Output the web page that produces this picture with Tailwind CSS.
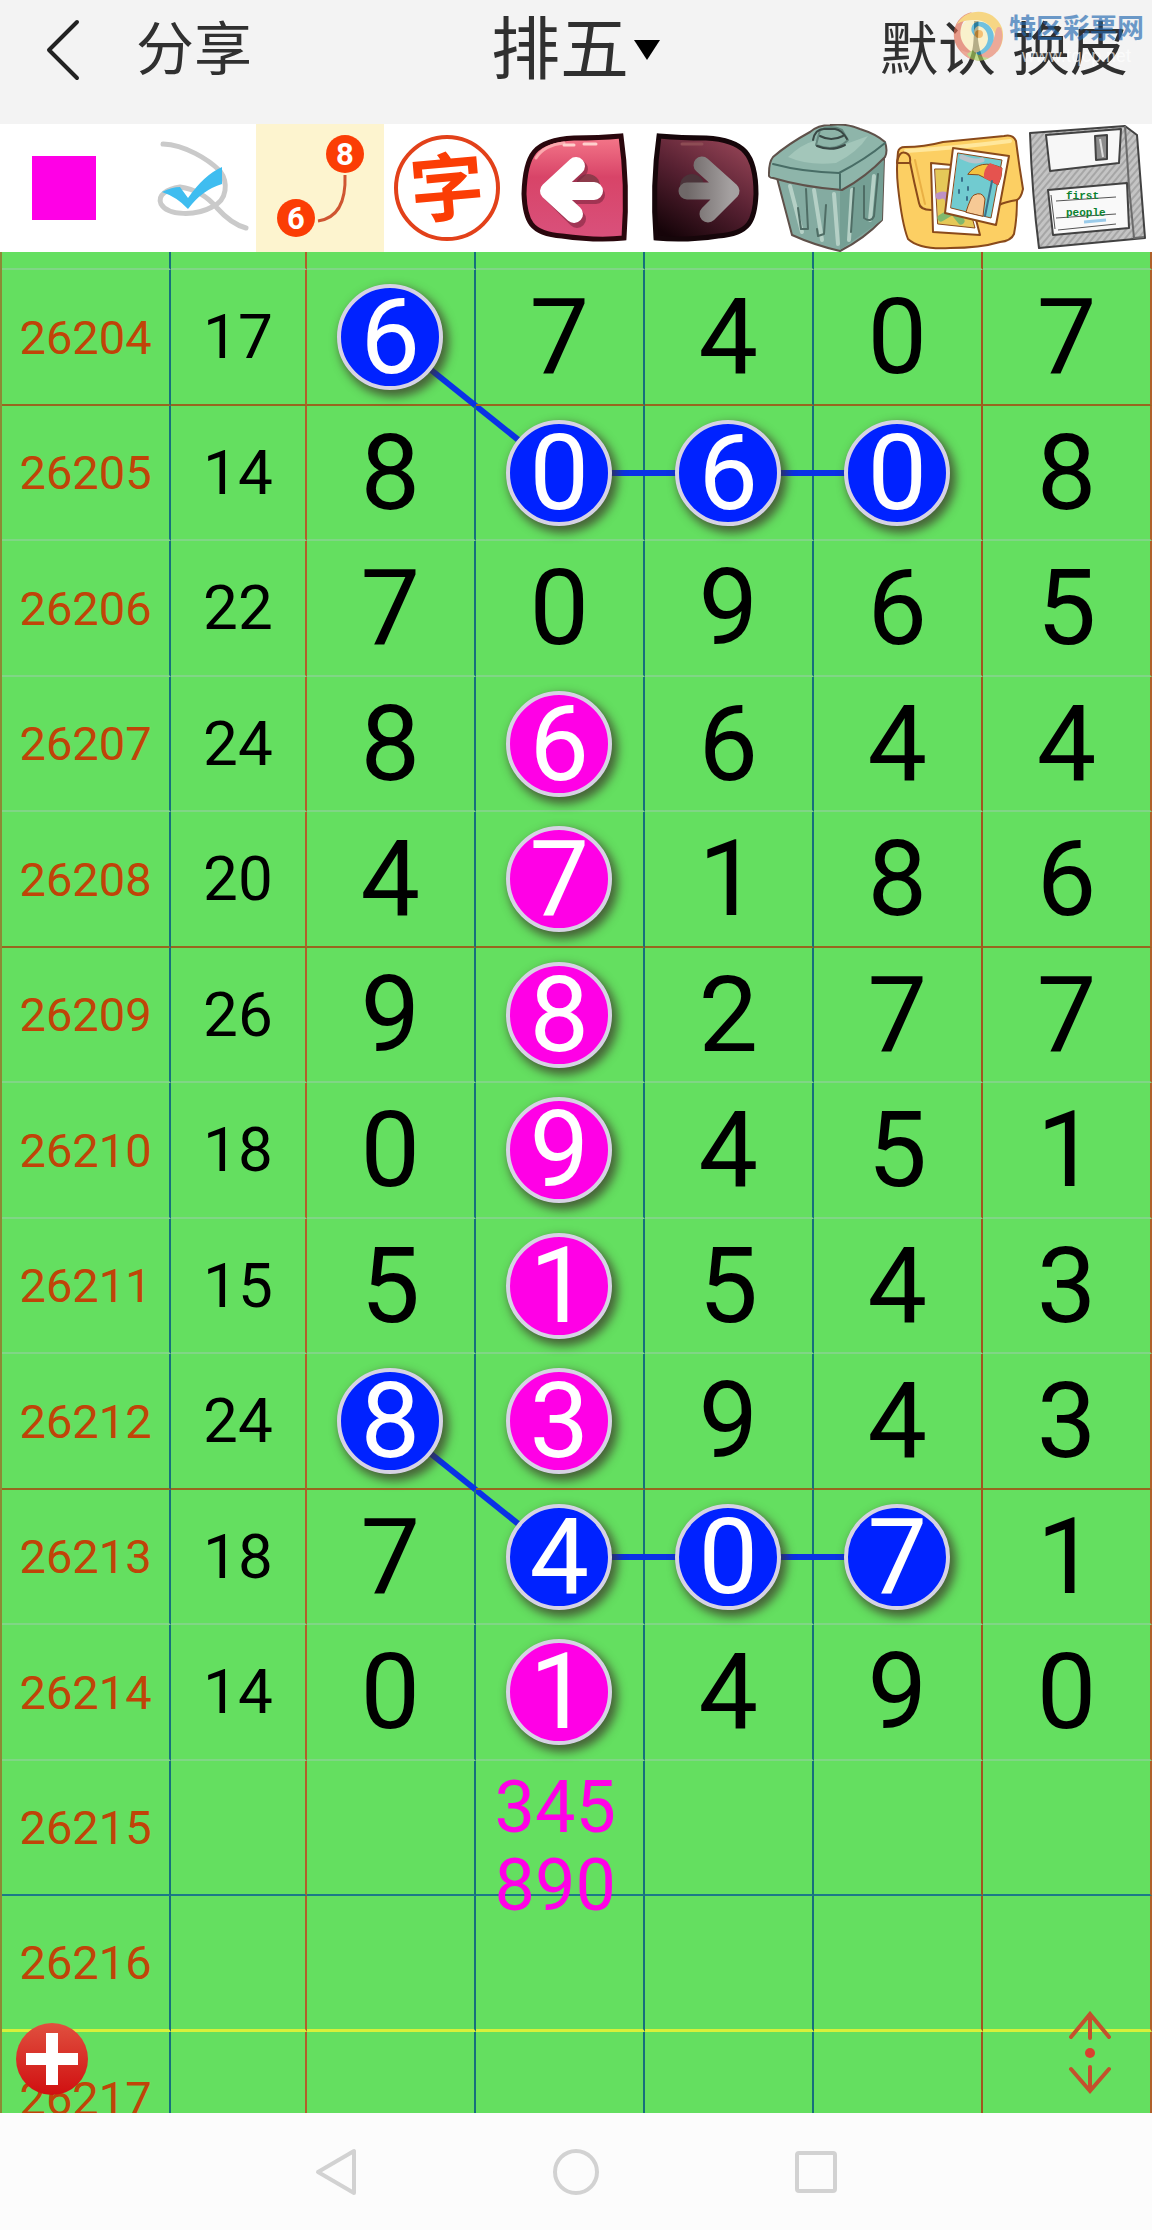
<!DOCTYPE html>
<html lang="zh-CN">
  <head>
    <title>排五</title>
    <meta charset="UTF-8" />
    <meta name="viewport" content="width=device-width, initial-scale=1" />
    <script src="https://cdn.jsdelivr.net/npm/@tailwindcss/browser@4"></script>
  </head>
  <body
    class="flex h-screen flex-col overflow-hidden bg-[#fcfcfc] font-[Roboto,'Noto_Sans_CJK_SC',sans-serif]"
  >
    <header
      class="relative grid h-[124px] shrink-0 grid-cols-[1fr_auto_1fr] items-center bg-[#f3f3f3] px-6 pb-6 text-[58px] leading-none text-[#303030]"
    >
      <div class="flex items-center gap-14 pl-5">
        <button aria-label="返回">
          <svg class="h-16 w-9" viewBox="0 0 36 64" fill="none" stroke="#222" stroke-width="4" stroke-linecap="round" stroke-linejoin="round">
            <path d="M33 4 5 32l28 28" />
          </svg>
        </button>
        <button>分享</button>
      </div>
      <div class="flex items-center gap-1 text-[69px]">
        <select aria-label="彩种" class="appearance-none leading-none">
          <option>排五</option>
        </select>
        <svg class="h-5 w-7" viewBox="0 0 28 20"><path d="M1 0h26L14 20z" /></svg>
      </div>
      <div class="flex justify-end gap-4">
        <button>默认</button>
        <button>换皮</button>
      </div>

      <!-- site mark -->
      <div class="pointer-events-none absolute top-2 right-2 flex items-start gap-1 opacity-65">
        <svg class="h-14 w-14" viewBox="0 0 56 56" fill="none">
          <circle cx="29" cy="28" r="19" fill="#fdf0b8" />
          <path d="M23 4C4 8-2 32 14 46c8 8 22 8 28 2C24 50 8 36 12 20c2-9 8-13 11-16z" fill="#e06a50" />
          <path d="M8 16C18-2 46 0 53 20c3 10-1 20-5 24 2-20-8-32-22-32-8 0-13 1-18 4z" fill="#f9c84a" />
          <path d="M52 20c6 18-8 34-24 32-8 0-14-5-16-10 16 8 32-2 34-16 1-8 4-8 6-6z" fill="#e98268" />
          <path d="M28 14c12-2 22 12 14 24-6 10-18 12-24 8 12 0 20-6 21-15 0-8-4-12-10-13-4 2-5 6-3 10-6-4-4-13 2-14z" fill="#2ba7d6" />
          <path d="M18 46c4 7 14 9 22 4-6 0-14-4-16-8z" fill="#a9d05a" />
          <circle cx="30" cy="26" r="4" fill="#f6a531" />
        </svg>
        <div class="pt-2 leading-none">
          <p class="text-[27px] font-bold text-[#2268b0]">特区彩票网</p>
          <p class="pt-1 text-center text-[18px] leading-none text-white">www.tqcp.net</p>
        </div>
      </div>
    </header>

    <div class="grid h-32 shrink-0 grid-cols-9 bg-white" role="toolbar">
      <button class="flex items-center justify-center" aria-label="颜色">
        <span class="size-16 bg-[#ff00e6]"></span>
      </button>

      <button aria-label="选择">
        <svg class="h-full w-full" viewBox="0 0 128 128" fill="none">
          <path d="M35 20c22 1 45 15 57 27 8 11 8 29-8 36-16 9-44 9-51-3-4-9 6-15 19-17 16 2 27 9 37 21 8 9 18 17 29 20" stroke="#cacaca" stroke-width="5" stroke-linecap="round" />
          <path d="M34 68q10-5 18-5l8 11q16-23 34-31v17q-20 6-34 25Q49 73 34 68z" fill="#3fbdf0" />
        </svg>
      </button>

      <button class="bg-[#fdf4cf]" aria-label="连线" aria-pressed="true">
        <svg class="h-full w-full" viewBox="0 0 128 128" text-anchor="middle" font-size="31" font-weight="700">
          <path d="M89 51c1 26-6 43-27 46" fill="none" stroke="#cf5531" stroke-width="3" />
          <circle cx="89" cy="30" r="19" fill="#fb3d05" />
          <circle cx="40" cy="94" r="19" fill="#fb3d05" />
          <text x="89" y="41" fill="#fff">8</text>
          <text x="40" y="105" fill="#fff">6</text>
        </svg>
      </button>

      <button aria-label="写字">
        <svg class="h-full w-full" viewBox="0 0 128 128">
          <circle cx="63" cy="64" r="51" fill="#fff" stroke="#e2411a" stroke-width="4" />
          <text x="63" y="91" text-anchor="middle" font-size="74" font-weight="700" fill="#fb3d05" transform="rotate(-5 63 64)">字</text>
        </svg>
      </button>

      <button aria-label="后退">
        <svg class="h-full w-full" viewBox="0 0 128 128">
          <defs>
            <linearGradient id="pink" x1="0" y1="0" x2="0" y2="1">
              <stop offset="0" stop-color="#f5788a" />
              <stop offset="0.4" stop-color="#d84468" />
              <stop offset="1" stop-color="#d9517c" />
            </linearGradient>
          </defs>
          <path d="M109 12Q116 60 112 114 85 117 50 112C18 110 13 96 12 70 13 30 22 16 62 14q25 0 47-2z" fill="url(#pink)" stroke="#2a070d" stroke-width="5" />
          <path d="M24 34q8-13 28-15" fill="none" stroke="#fba9ae" stroke-width="3" stroke-linecap="round" />
          <path d="M52 21h10M72 20h12" stroke="#ffd0cd" stroke-width="3" stroke-linecap="round" />
          <circle cx="76" cy="62" r="12" fill="#8e3b4b" />
          <path d="M67 45 40 70l25 25M44 71h40" fill="none" stroke="#7d2740" stroke-width="18" stroke-linecap="round" stroke-linejoin="round" opacity=".6" />
          <path d="M64 42 37 67l25 23M40 67h42" fill="none" stroke="#fff" stroke-width="18" stroke-linecap="round" stroke-linejoin="round" />
        </svg>
      </button>

      <button aria-label="前进">
        <svg class="h-full w-full" viewBox="0 0 128 128">
          <defs>
            <linearGradient id="dark" x1="0.8" y1="0" x2="0.2" y2="1">
              <stop offset="0" stop-color="#974557" />
              <stop offset="0.5" stop-color="#562031" />
              <stop offset="1" stop-color="#160409" />
            </linearGradient>
            <linearGradient id="silver" x1="0" y1="0" x2="1" y2="0">
              <stop offset="0" stop-color="#6f6868" />
              <stop offset="1" stop-color="#a5a1a1" />
            </linearGradient>
          </defs>
          <path d="M19 12Q12 60 16 114 45 117 78 112C110 110 115 96 116 70 116 30 104 16 66 14q-25 0-47-2z" fill="url(#dark)" stroke="#16060a" stroke-width="5" />
          <path d="M42 20h20" stroke="#8d4c54" stroke-width="3" stroke-linecap="round" />
          <circle cx="52" cy="62" r="12" fill="#4b343a" />
          <path d="M62 41 91 67 68 90M47 67h42" fill="none" stroke="url(#silver)" stroke-width="17" stroke-linecap="round" stroke-linejoin="round" />
        </svg>
      </button>

      <button aria-label="清空">
        <svg class="h-full w-full" viewBox="0 0 128 128" fill="none" stroke="#5f514a" stroke-width="2" stroke-linecap="round" stroke-linejoin="round">
          <path d="M9 54 24 111q22 10 48 16 24-12 42-31l2-62z" fill="#84aba1" />
          <path d="M72 66v60l42-30 2-60z" fill="#759f94" stroke="none" />
          <path d="m22 62 12 46M46 66l8 50M66 70l4 50M84 66l-3 50M106 52l-4 44" stroke="#b5d0c6" stroke-width="4" />
          <path d="m30 84 3 21h7l-2-40M49 105l1 7 6-2 2-29M96 62v32q7 5 10-2l4-42M86 64l-3 44" stroke="#4f6d65" />
          <path d="M1 49q0-11 4-16Q20 20 42 8 50 1 62 1q16-2 30 4 16 5 25 13 3 9 0 15-19 20-43 33Q35 63 5 54 0 54 1 49z" fill="#8eb5aa" />
          <path d="M5 40q30 8 66 9Q98 35 117 19M72 50v15" stroke="#486d66" />
          <path d="M20 33Q34 20 46 17l32 3 22-8q-10 16-32 27-28 3-48-6z" fill="#a3c6ba" stroke="none" />
          <path d="M52 6q11-6 22 0l6 10q-13 13-32 5z" fill="#8db4a8" stroke="#64867d" />
          <path d="M45 16q2-11 11-11h11q7 1 12 10M52 12q11 6 23 0M49 22q14 6 28-1" stroke="#394845" />
        </svg>
      </button>

      <button aria-label="相册">
        <svg class="h-full w-full" viewBox="0 0 128 128" fill="none" stroke="#8a4a1b" stroke-width="2" stroke-linejoin="round" stroke-linecap="round">
          <path d="M2 28q1-5 7-5 19 0 38-5l61-6q9-2 12 5 3 24 7 48-2 9-6 11 0 19-3 34-3 7-14 8-20 6-50 6-30 2-42-9Q6 100 2 63 0 45 2 28z" fill="#fccf63" />
          <path d="M10 27q50-3 104-10" stroke="#ffe79c" stroke-width="4" />
          <path d="M1 39q2-13 9-10 5 2 4 9 4 20 9 41 1 7 12 7M1 39h13M121 76q-12 2-18 5" />
          <path d="M19 36q5 23 10 44" stroke="#eab044" />
          <path d="m35 39 31 3 18 69-47-3z" fill="#fff" />
          <path d="M39 45h24l16 59-37-4z" fill="#e5c858" stroke-width="1" />
          <path d="M43 72q10-4 10 10" stroke="#bd91c5" stroke-width="7" />
          <path d="m45 94 12-7 8 10" stroke="#80b86d" stroke-width="7" />
          <path d="m57 24 56 8-13 69-51-12z" fill="#fff" />
          <path d="m62 29 44 7-11 58-40-10z" fill="#71cbd0" stroke-width="1" />
          <path d="M66 33q12 6 20 3" stroke="#b9c4cb" stroke-width="5" />
          <path d="M72 50Q84 34 106 44q0 9-4 17l-9-5-10-5z" fill="#f4c23f" stroke-width="1" />
          <path d="M88 54q-1-9 6-15l12 5q0 9-4 17z" fill="#e5534f" stroke="none" />
          <path d="m96 57-7 35M66 54v3M72 63v3M63 66v3M71 73v3" stroke="#39708b" />
          <path d="M70 88q5-16 8-17 8-4 11 4l-2 17z" fill="#f6c995" stroke-width="1" />
        </svg>
      </button>

      <button aria-label="保存">
        <svg class="h-full w-full" viewBox="0 0 128 128" fill="none" stroke="#424242" stroke-width="2" stroke-linejoin="round">
          <defs>
            <pattern id="hatch" width="5" height="5" patternUnits="userSpaceOnUse" patternTransform="rotate(40)">
              <path d="M0 0h5v5H0z" fill="#c4c4c4" stroke="none" />
              <path d="M1 0v5" stroke="#888" stroke-width="1" />
            </pattern>
          </defs>
          <path d="m6 9 95-7 12 9 8 103-106 10Q8 70 6 9z" fill="url(#hatch)" />
          <path d="m101 2 4 60 5 52 10-1" stroke="#6b6b6b" />
          <path d="m22 11 75-6-2 34-69 8z" fill="#f7f7f7" />
          <path d="m71 12 12-1v24l-11 1z" fill="#8c8c8c" />
          <path d="m76 15 3 18" stroke="#ddd" stroke-width="2" />
          <path d="m24 66 79-7 2 45-76 7z" fill="#f9f9f9" />
          <path d="m32 77 60-4M32 94l60-4M34 106l58-6M27 71l4 34" stroke="#555" stroke-width="1" />
          <path d="m60 98 22-2" stroke="#9acbea" stroke-width="3" />
          <g fill="#0b8230" stroke="none" font-family="Liberation Mono" font-weight="700" font-size="11">
            <text x="42" y="75">first</text>
            <text x="42" y="92">people</text>
          </g>
        </svg>
      </button>
    </div>

    <main class="relative min-h-0 flex-1 overflow-hidden bg-[#64df60]">
      <table class="w-full table-fixed border-separate border-spacing-0 border-l-2 border-[#8c8a35] text-center leading-none">
        <colgroup>
          <col class="w-[14.7%]" />
          <col class="w-[11.8%]" />
          <col class="w-[14.7%]" />
          <col class="w-[14.7%]" />
          <col class="w-[14.7%]" />
          <col class="w-[14.7%]" />
          <col class="w-[14.7%]" />
        </colgroup>
        <tbody id="rows"></tbody>
      </table>

      <button class="absolute bottom-[18px] left-4 z-20" aria-label="添加">
        <svg class="size-[72px]" viewBox="0 0 72 72">
          <defs>
            <linearGradient id="red" x1="0" y1="0" x2="0" y2="1">
              <stop offset="0" stop-color="#e0503f" />
              <stop offset="1" stop-color="#d00f10" />
            </linearGradient>
          </defs>
          <circle cx="36" cy="36" r="36" fill="url(#red)" />
          <path d="M36 10v52M10 36h52" stroke="#fff" stroke-width="12" />
        </svg>
      </button>

      <button class="absolute right-10 bottom-[18px] z-20" aria-label="滚动">
        <svg class="h-[84px] w-11" viewBox="0 0 44 84" fill="none" stroke="#c4502d" stroke-width="4" stroke-linecap="round">
          <path d="M22 27V3M3 26 22 3l19 23M22 56v24M3 58l19 22 19-22" />
          <circle cx="22" cy="42" r="5" fill="#d9402f" stroke="none" />
        </svg>
      </button>
    </main>

    <nav class="flex h-[117px] shrink-0 items-center justify-center">
      <button class="flex w-60 justify-center" aria-label="返回键">
        <svg class="size-12" viewBox="0 0 48 48" fill="none" stroke="#d2d2d2" stroke-width="4" stroke-linejoin="round">
          <path d="M42 3v42L6 24z" />
        </svg>
      </button>
      <button class="flex w-60 justify-center" aria-label="主页键">
        <span class="size-[46px] rounded-full border-4 border-[#d2d2d2]"></span>
      </button>
      <button class="flex w-60 justify-center" aria-label="任务键">
        <span class="size-[42px] rounded-sm border-4 border-[#d2d2d2]"></span>
      </button>
    </nav>

    <script>
      // b = blue ball, p = pink ball, > = line to the next cell, \ = line down to the next row
      const draws = [
        ['26204', '17', ['6b\\', '7', '4', '0', '7']],
        ['26205', '14', ['8', '0b>', '6b>', '0b', '8']],
        ['26206', '22', ['7', '0', '9', '6', '5']],
        ['26207', '24', ['8', '6p', '6', '4', '4']],
        ['26208', '20', ['4', '7p', '1', '8', '6']],
        ['26209', '26', ['9', '8p', '2', '7', '7']],
        ['26210', '18', ['0', '9p', '4', '5', '1']],
        ['26211', '15', ['5', '1p', '5', '4', '3']],
        ['26212', '24', ['8b\\', '3p', '9', '4', '3']],
        ['26213', '18', ['7', '4b>', '0b>', '7b', '1']],
        ['26214', '14', ['0', '1p', '4', '9', '0']],
        ['26215', '', ['', 'note', '', '', '']],
        ['26216', '', ['', '', '', '', '']],
        ['26217', '', ['', '', '', '', '']],
      ];

      const colLines = [
        'border-r-[#16707c]',
        'border-r-[#b0602a]',
        'border-r-[#16707c]',
        'border-r-[#16707c]',
        'border-r-[#16707c]',
        'border-r-[#a0561f]',
        'border-r-[#b0602a]',
      ];

      const rowLine = (i) => {
        if (i === 12) return 'border-b-3 border-b-[#d8f03a]';
        if (i === 11) return 'border-b-2 border-b-[#1c7a88]';
        return i % 4 === 0
          ? 'border-b-2 border-b-[#98661f]'
          : 'border-b-2 border-b-[#80d686]';
      };

      const ball =
        'relative z-10 mx-auto flex size-[106px] items-center justify-center rounded-full border-4 border-[#d6d3e4] text-white shadow-[4px_5px_10px_2px_rgba(60,50,40,0.7)]';

      const digit = (s) => {
        if (s === 'note') {
          return '<div class="absolute top-2 left-0 z-10 w-full pr-2 text-[72px] leading-[78px] text-[#ff00e6]">345<br />890</div>';
        }
        let html = '';
        if (s.includes('>')) {
          html += '<div class="absolute top-1/2 left-1/2 h-1.5 w-full -translate-y-1/2 bg-[#0a32e6]"></div>';
        }
        if (s.includes('\\')) {
          html +=
            '<svg class="absolute top-1/2 left-1/2 h-full w-full" viewBox="0 0 100 100" preserveAspectRatio="none"><path d="M0 0 100 100" stroke="#0a32e6" stroke-width="6" vector-effect="non-scaling-stroke" /></svg>';
        }
        if (s.includes('b')) {
          return `${html}<div class="${ball} bg-[#0022ff]">${s[0]}</div>`;
        }
        if (s.includes('p')) {
          return `${html}<div class="${ball} bg-[#ff00e6]">${s[0]}</div>`;
        }
        return html + s;
      };

      const spacer = colLines
        .map((c) => `<td class="h-[18px] border-r-2 border-b-2 border-b-[#80d686] ${c}"></td>`)
        .join('');

      document.querySelector('#rows').innerHTML =
        `<tr aria-hidden="true">${spacer}</tr>` +
        draws
          .map(([issue, sum, digits], i) => {
            const height = i % 2 ? 'h-[135px]' : 'h-[136px]';
            const td = (j, cls, html) =>
              `<td class="relative border-r-2 p-0 ${height} ${rowLine(i)} ${colLines[j]} ${cls}">${html}</td>`;
            return `<tr>${td(0, 'text-[47px] text-[#c04408]', issue)}${td(1, 'text-[62px]', sum)}${digits
              .map((d, j) => td(j + 2, 'text-[106px]', digit(d)))
              .join('')}</tr>`;
          })
          .join('');
    </script>
  </body>
</html>
